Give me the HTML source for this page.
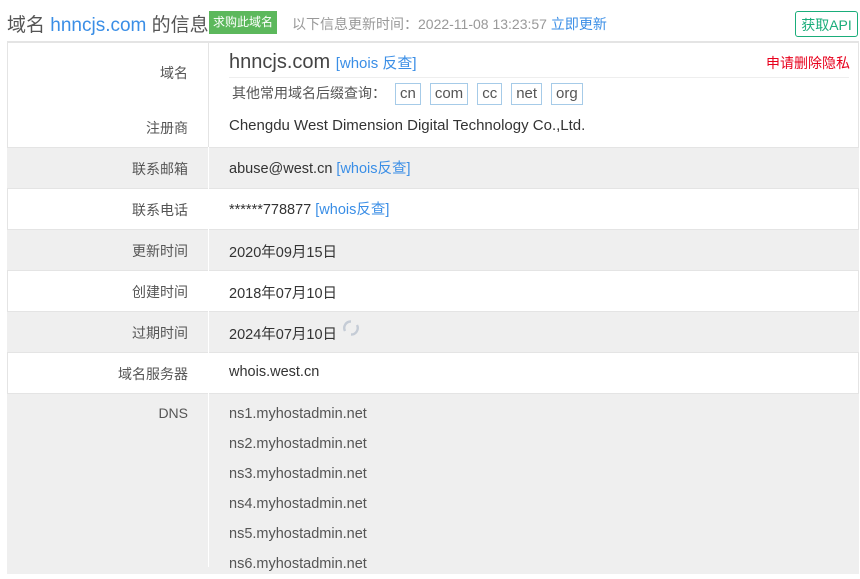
<!DOCTYPE html>
<html><head><meta charset="utf-8"><style>
body{margin:0;background:#fff;font-family:"Liberation Sans","Noto Sans CJK SC",sans-serif;color:#333;width:860px;height:566px;overflow:hidden;position:relative}
.a{position:absolute;white-space:nowrap}
.blue{color:#3a8ee6}
.row{position:absolute;left:7px;width:852px;border-top:1px solid #e4e4e4}
.g{background:#efefef}
.lab{position:absolute;right:672px;font-size:14px;color:#555}
.val{position:absolute;left:221px;font-size:14.5px;color:#333}
.tag{display:inline-block;border:1px solid #a6cbe8;padding:0 4px;height:20px;line-height:20px;margin-right:9px;font-size:15px;color:#555}
</style></head><body>
<div class="a" style="left:7px;top:10px;font-size:19px;color:#555">域名 <span class="blue">hnncjs.com</span> 的信息</div>
<div class="a" style="left:209px;top:11px;background:#5cb85c;color:#fff;font-size:12px;padding:0 4px;height:23px;line-height:23px">求购此域名</div>
<div class="a" style="left:292px;top:14px;font-size:14px;color:#999">以下信息更新时间：2022-11-08 13:23:57 <span class="blue">立即更新</span></div>
<div class="a" style="left:795px;top:11px;width:63px;height:26px;border:1px solid #1aad7a;border-radius:3px;color:#1aad7a;font-size:14px;line-height:26px;text-align:center;box-sizing:border-box">获取API</div>
<div style="position:absolute;left:7px;top:41px;width:852px;height:530px;border:1px solid #e4e4e4;border-top:2px solid #e4e4e4;box-sizing:border-box"></div>
<div style="position:absolute;left:208px;top:42px;width:1px;height:530px;background:#e4e4e4"></div>
<div class="row g" style="top:147px;height:41px"></div>
<div class="row" style="top:188px;height:41px"></div>
<div class="row g" style="top:229px;height:41px"></div>
<div class="row" style="top:270px;height:41px"></div>
<div class="row g" style="top:311px;height:41px"></div>
<div class="row" style="top:352px;height:41px"></div>
<div class="row g" style="top:393px;height:180px"></div>
<div style="position:absolute;left:208px;top:147px;width:1px;height:420px;background:#fff"></div>
<div class="lab a" style="top:63px">域名</div>
<div class="a" style="left:229px;top:51px;font-size:20px;color:#444">hnncjs.com <span class="blue" style="font-size:15px">[whois 反查]</span></div>
<div class="a" style="left:766px;top:53px;font-size:14px;color:#e8001c">申请删除隐私</div>
<div style="position:absolute;left:229px;top:77px;width:620px;height:1px;background:#eee"></div>
<div class="a" style="left:232px;top:83px;font-size:14px;color:#555">其他常用域名后缀查询：</div>
<div class="a" style="left:395px;top:83px"><span class="tag">cn</span><span class="tag">com</span><span class="tag">cc</span><span class="tag">net</span><span class="tag">org</span></div>
<div class="lab a" style="top:118px">注册商</div>
<div class="val a" style="left:229px;top:117px;font-size:15px">Chengdu West Dimension Digital Technology Co.,Ltd.</div>
<div class="lab a" style="top:159px">联系邮箱</div>
<div class="val a" style="left:229px;top:157px">abuse@west.cn <span class="blue">[whois反查]</span></div>
<div class="lab a" style="top:200px">联系电话</div>
<div class="val a" style="left:229px;top:198px">******778877 <span class="blue">[whois反查]</span></div>
<div class="lab a" style="top:241px">更新时间</div>
<div class="val a" style="left:229px;top:241px">2020年09月15日</div>
<div class="lab a" style="top:282px">创建时间</div>
<div class="val a" style="left:229px;top:282px">2018年07月10日</div>
<div class="lab a" style="top:323px">过期时间</div>
<div class="val a" style="left:229px;top:323px">2024年07月10日</div>
<svg class="a" style="left:342px;top:319px" width="18" height="18" viewBox="0 0 18 18"><path d="M3 12A6.5 6.5 0 0 1 9 2.5M15 6A6.5 6.5 0 0 1 9 15.5" fill="none" stroke="#c5ccd6" stroke-width="2.4"/></svg>
<div class="lab a" style="top:364px">域名服务器</div>
<div class="val a" style="left:229px;top:364px">whois.west.cn</div>
<div class="lab a" style="top:405px">DNS</div>
<div class="val a" style="left:229px;top:399px;line-height:30px;color:#555">ns1.myhostadmin.net<br>ns2.myhostadmin.net<br>ns3.myhostadmin.net<br>ns4.myhostadmin.net<br>ns5.myhostadmin.net<br>ns6.myhostadmin.net</div>
</body></html>
